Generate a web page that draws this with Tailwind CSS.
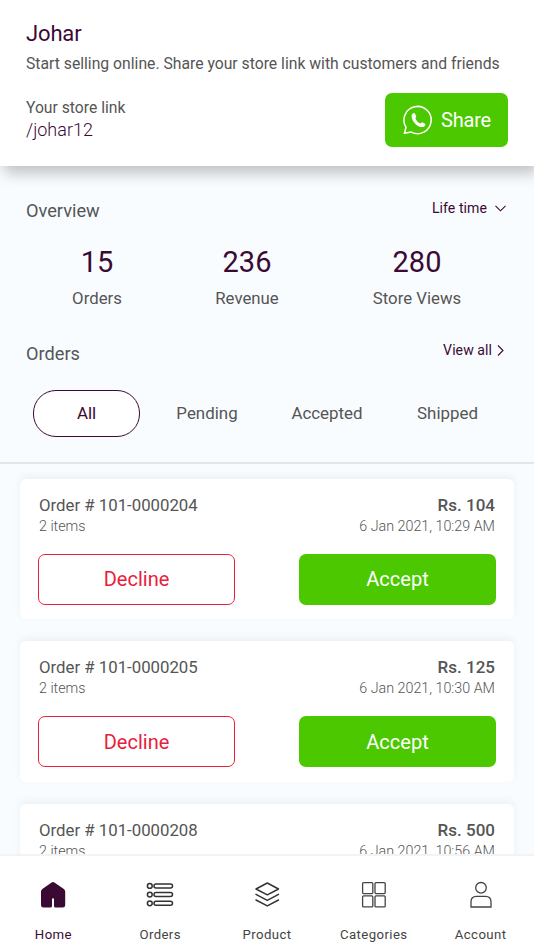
<!DOCTYPE html>
<html lang="en">
<head>
<meta charset="utf-8">
<title>Store dashboard</title>
<script src="https://cdn.jsdelivr.net/npm/@tailwindcss/browser@4"></script>
</head>
<body class="flex h-[950px] w-[534px] flex-col overflow-hidden bg-[#f9fcff] font-[Roboto,sans-serif] text-[#555]">
  <header class="relative h-[166px] shrink-0 bg-white px-[26px] pt-[20px] shadow-[4px_7px_14px_rgba(0,0,0,0.24)]">
    <h1 class="text-[22px] leading-[28px] tracking-[-0.15px] text-[#3a0a35]">Johar</h1>
    <p class="mt-[6px] whitespace-nowrap text-[15.72px] leading-[20px]">Start selling online. Share your store link with customers and friends</p>
    <div class="mt-[18.500px] flex justify-between">
      <div class="pt-[5.500px]">
        <p class="text-[15.7px] leading-[20px]">Your store link</p>
        <p class="text-[18px] leading-[24px] font-light text-[#3a0a35]">/johar12</p>
      </div>
      <button class="flex h-[54px] w-[123px] items-center rounded-[7px] bg-[#4bc800] pl-[18px] text-[20px] tracking-[-0.2px] text-white">
        <svg class="size-[30px]" viewBox="0 0 30 30" fill="none" stroke="#fff" stroke-width="1.5" stroke-linejoin="round"><path d="M1.4 28.3 3 22.2A13.6 13.6 0 1 1 8.3 27.1Z"/><path fill="#fff" stroke="none" d="M9 9.5c1-1.5 2.4-1.8 3-.8l1.200 2.500c.3.8-1 1.800-.8 2.400.7 1.800 2.600 3.800 4.600 4.800.8.3 1.800-1.400 2.600-1l2.400 1.300c1 .6.1 2.400-1.100 3-2.400 1.100-6.100-.3-8.700-3S7.800 11.500 9 9.500Z"/></svg>
        <span class="ml-[8px]">Share</span>
      </button>
    </div>
  </header>

  <section class="h-[144px] shrink-0 pt-[32px]">
    <div class="flex justify-between pr-[28px] pl-[26px]">
      <h2 class="pt-[1px] text-[18.2px] leading-[24px]">Overview</h2>
      <div class="flex h-[20px] items-center text-[14.1px] tracking-[0.05px] text-[#3a0a35]"><span class="pt-[1px]">Life time</span>
        <svg class="ml-[8px] h-[7px] w-[11px]" viewBox="0 0 11 7" fill="none" stroke="#3a0a35" stroke-width="1.1"><path d="m.5 .8 5 5 5-5"/></svg>
      </div>
    </div>
    <div class="mt-[21px] flex pl-[26px] text-center">
      <div class="w-[142px]"><p class="text-[29px] leading-[36px] text-[#3a0a35]">15</p><p class="mt-[8px] text-[16.8px] leading-[20px]">Orders</p></div>
      <div class="w-[158px]"><p class="text-[29px] leading-[36px] text-[#3a0a35]">236</p><p class="mt-[8px] text-[16.8px] leading-[20px]">Revenue</p></div>
      <div class="w-[182px]"><p class="text-[29px] leading-[36px] text-[#3a0a35]">280</p><p class="mt-[8px] text-[16.8px] leading-[20px]">Store Views</p></div>
    </div>
  </section>

  <section class="h-[154px] shrink-0 border-b-2 border-[#e1e6e8] pt-[30px]">
    <div class="flex justify-between pr-[30px] pl-[26px]">
      <h2 class="pt-[1.500px] text-[18.2px] leading-[23.500px]">Orders</h2>
      <div class="flex h-[20px] items-center text-[14.1px] tracking-[0.05px] text-[#3a0a35]"><span class="pt-[2px]">View all</span>
        <svg class="ml-[5px] h-[11px] w-[7px]" viewBox="0 0 7 11" fill="none" stroke="#3a0a35" stroke-width="1.1"><path d="m1 .5 5 5-5 5"/></svg>
      </div>
    </div>
    <nav class="mt-[25px] ml-[33px] flex h-[47px] items-center text-center text-[16.9px]">
      <span class="flex h-[47px] w-[107px] items-center justify-center rounded-[23px] border-[1.5px] border-[#3a0a35] bg-white text-[#3a0a35]">All</span>
      <span class="ml-[7px] w-[120px]">Pending</span>
      <span class="w-[120px]">Accepted</span>
      <span class="w-[121px]">Shipped</span>
    </nav>
  </section>

  <main class="min-h-0 flex-1 overflow-hidden px-[20px] pt-[14.500px]" id="orders"></main>

  <nav class="relative grid h-[96px] shrink-0 grid-cols-5 border-t-2 border-[#f1f3f4] bg-white text-center text-[13.2px] tracking-[0.4px] text-[#444]">
    <div class="flex flex-col items-center pt-[24px] text-[#3a0a35]">
      <svg class="size-[30px]" viewBox="0 0 30 30"><path fill="#3a0a35" d="M13.600 2.500Q15 1.700 16.400 2.500L25.500 8.700Q27.200 9.900 27.200 11.500V25Q27.200 27.500 24.800 27.500H17.600Q16 27.500 16 26V19.300Q16 18.300 15 18.300T14 19.300V26Q14 27.500 12.400 27.500H5.400Q3 27.500 3 25V11.500Q3 9.900 4.700 8.700Z"/></svg>
      <span class="mt-[15px] leading-[20px]">Home</span>
    </div>
    <div class="flex flex-col items-center pt-[24px]">
      <svg class="size-[30px]" viewBox="0 0 30 30" fill="none" stroke="#333" stroke-width="1.5"><circle cx="4.800" cy="5.900" r="2.400"/><circle cx="4.800" cy="14.600" r="2.400"/><circle cx="4.800" cy="23.300" r="2.400"/><rect x="9" y="3.900" width="18.500" height="4" rx="2"/><rect x="9" y="12.600" width="18.500" height="4" rx="2"/><rect x="9" y="21.300" width="18.500" height="4" rx="2"/></svg>
      <span class="mt-[15px] leading-[20px]">Orders</span>
    </div>
    <div class="flex flex-col items-center pt-[24px]">
      <svg class="size-[30px]" viewBox="0 0 30 30" fill="none" stroke="#333" stroke-width="1.500" stroke-linejoin="round" stroke-linecap="round"><path d="m15.300 3 11.200 6-11.200 5.800L4 9ZM4 14.400l11.300 5.900 11.200-5.900M4 20l11.300 5.900L26.500 20"/></svg>
      <span class="mt-[15px] leading-[20px]">Product</span>
    </div>
    <div class="flex flex-col items-center pt-[24px]">
      <svg class="size-[30px]" viewBox="0 0 30 30" fill="none" stroke="#444" stroke-width="1.300"><rect x="3.600" y="2.600" width="10.200" height="11" rx="1"/><rect x="16" y="2.600" width="10.200" height="11" rx="1"/><rect x="3.600" y="15.900" width="10.200" height="11" rx="1"/><rect x="16" y="15.900" width="10.200" height="11" rx="1"/></svg>
      <span class="mt-[15px] leading-[20px]">Categories</span>
    </div>
    <div class="flex flex-col items-center pt-[24px]">
      <svg class="size-[30px]" viewBox="0 0 30 30" fill="none" stroke="#444" stroke-width="1.300"><circle cx="15" cy="7.800" r="5.300"/><path d="M5 27V22Q5 16.300 10.500 16.300H19.500Q25 16.300 25 22V27Z"/></svg>
      <span class="mt-[15px] leading-[20px]">Account</span>
    </div>
  </nav>

  <script>
    const orders = [
      ["101-0000204", "104", "10:29"],
      ["101-0000205", "125", "10:30"],
      ["101-0000208", "500", "10:56"],
    ];
    document.getElementById("orders").innerHTML = orders.map(([id, price, time]) => `
      <article class="mb-[22px] h-[140.500px] w-[494px] rounded-[6px] bg-white pt-[16px] pr-[18px] pl-[18px] shadow-[0_-3px_8px_rgba(0,0,0,0.05)]">
        <div class="flex justify-between px-[1px] text-[16.8px] leading-[20px]"><span>Order # ${id}</span><b class="text-[17px] font-medium">Rs. ${price}</b></div>
        <div class="mt-[1px] flex justify-between px-[1px] text-[14.3px] leading-[20px] font-light"><span>2 items</span><span>6 Jan 2021, ${time} AM</span></div>
        <div class="mt-[18px] flex justify-between text-[20px]">
          <button class="h-[51px] w-[197px] rounded-[7px] border border-[#e8203c] text-[#e8203c]">Decline</button>
          <button class="h-[51px] w-[197px] rounded-[7px] bg-[#4bc800] text-white">Accept</button>
        </div>
      </article>`).join("");
  </script>
</body>
</html>
